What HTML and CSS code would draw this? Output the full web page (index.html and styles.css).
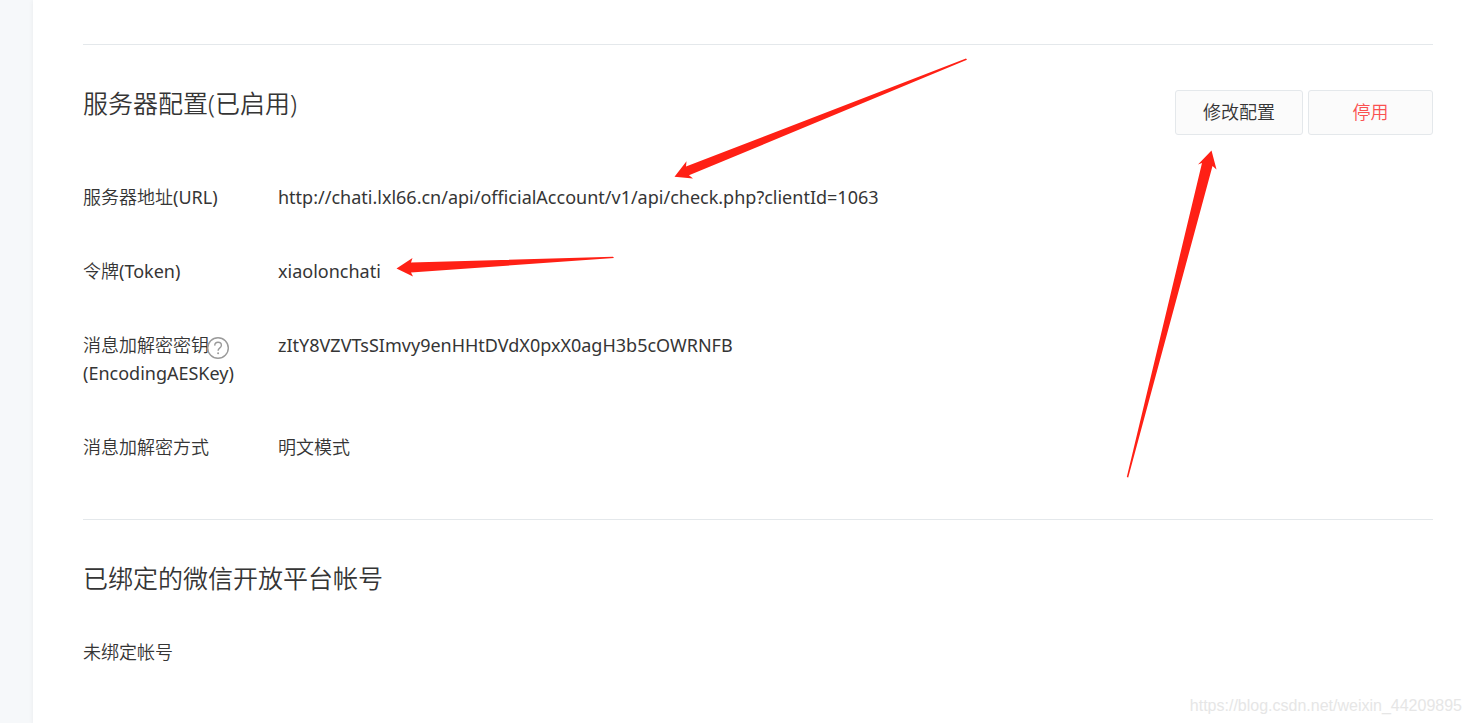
FILE: index.html
```
<!DOCTYPE html>
<html lang="zh-CN">
<head>
<meta charset="utf-8">
<meta name="viewport" content="width=device-width, initial-scale=1">
<title>服务器配置</title>
<link rel="stylesheet" href="styles.css">
</head>
<body>
<main class="panel">
  <section class="section">
    <header class="section-head">
      <h2 class="title">服务器配置(已启用)</h2>
      <div class="actions">
        <button class="btn" type="button">修改配置</button>
        <button class="btn btn-warn" type="button">停用</button>
      </div>
    </header>
    <dl class="fields">
      <div class="field">
        <dt>服务器地址<span class="latin">(URL)</span></dt>
        <dd class="latin">http://chati.lxl66.cn/api/officialAccount/v1/api/check.php?clientId=1063</dd>
      </div>
      <div class="field">
        <dt>令牌<span class="latin">(Token)</span></dt>
        <dd class="latin">xiaolonchati</dd>
      </div>
      <div class="field">
        <dt>消息加解密密钥<svg class="help" viewBox="0 0 22 22" role="img" aria-label="帮助"><circle cx="11" cy="11" r="10.3"/><path d="M7.7 8.6C7.8 6.5 9.100 5.300 11 5.300C13 5.300 14.400 6.500 14.400 8.300C14.400 9.600 13.700 10.300 12.600 11.100C11.500 11.900 11.100 12.400 11.100 13.700"/><circle class="dot" cx="11.100" cy="16.200" r="1"/></svg><br><span class="latin">(EncodingAESKey)</span></dt>
        <dd class="latin">zItY8VZVTsSImvy9enHHtDVdX0pxX0agH3b5cOWRNFB</dd>
      </div>
      <div class="field">
        <dt>消息加解密方式</dt>
        <dd>明文模式</dd>
      </div>
    </dl>
  </section>
  <section class="section">
    <header class="section-head">
      <h2 class="title">已绑定的微信开放平台帐号</h2>
    </header>
    <p class="note">未绑定帐号</p>
  </section>
</main>
<svg class="arrow arrow-url" viewBox="674 58 294 122" aria-hidden="true"><path d="M674.500 176.700L686.500 161.200L686 166.500L966 58.500L967 59.800L689 175.300L693 178.500Z"/></svg>
<svg class="arrow arrow-token" viewBox="396 255 220 24" aria-hidden="true"><path d="M396.500 268.500L412.500 258L411 262.500L613 256.800L614 258L411 272.500L413 276.500Z"/></svg>
<svg class="arrow arrow-edit" viewBox="1125 149 94 331" aria-hidden="true"><path d="M1211.500 150.500L1216.500 169.500L1212.500 166L1128.200 477.500L1126.800 477L1202 163L1198 164.500Z"/></svg>
<div class="watermark">https://blog.csdn.net/weixin_44209895</div>
</body>
</html>
```
FILE: styles.css
```
* { box-sizing: border-box; }
body {
  margin: 0;
  min-height: 100vh;
  position: relative;
  display: flex;
  padding-left: 33px;
  background: #f6f8fa;
  color: #353535;
  font: 350 18px/28px "Noto Sans", "Noto Sans CJK SC", sans-serif;
}
.panel {
  flex: 1;
  padding: 44px 38px 0 50px;
  background: #fff;
  box-shadow: 0 0 5px rgba(0, 0, 0, .06);
}
.section {
  border-top: 1px solid #e4e8eb;
  padding: 40px 0 58px;
}
.section-head {
  display: flex;
  justify-content: space-between;
  align-items: flex-start;
}
.title {
  margin: 0;
  font-size: 25px;
  line-height: 36px;
  font-weight: 350;
}
.actions {
  display: flex;
  gap: 5px;
  padding-top: 5px;
}
.btn {
  min-width: 125px;
  height: 45px;
  padding: 0 27px 2px;
  border: 1px solid #e4e8eb;
  border-radius: 3px;
  background: #fbfbfb;
  color: inherit;
  font: inherit;
}
.btn-warn { color: #fa5151; }
.fields {
  display: grid;
  gap: 46px;
  margin: 48px 0 0;
}
.field {
  display: grid;
  grid-template-columns: 195px 1fr;
}
.field dt { white-space: nowrap; }
.field dd { margin: 0; }
.latin { font-weight: 400; }
.note { margin: 42px 0 0; }
.help {
  width: 22px;
  height: 22px;
  margin: -4px 0 -4px -2px;
  vertical-align: -3px;
  fill: none;
  stroke: #9a9a9a;
  stroke-width: 1.4;
}
.help .dot { fill: #9a9a9a; stroke: none; }
.arrow {
  position: absolute;
  fill: #ff2015;
  pointer-events: none;
}
.arrow-url { left: 674px; top: 58px; width: 294px; height: 122px; }
.arrow-token { left: 396px; top: 255px; width: 220px; height: 24px; }
.arrow-edit { right: 252px; top: 149px; width: 94px; height: 331px; }
.watermark {
  position: absolute;
  right: 9px;
  bottom: 4px;
  color: #e6e6e6;
  font: 16px/28px "Liberation Sans", sans-serif;
}
```
